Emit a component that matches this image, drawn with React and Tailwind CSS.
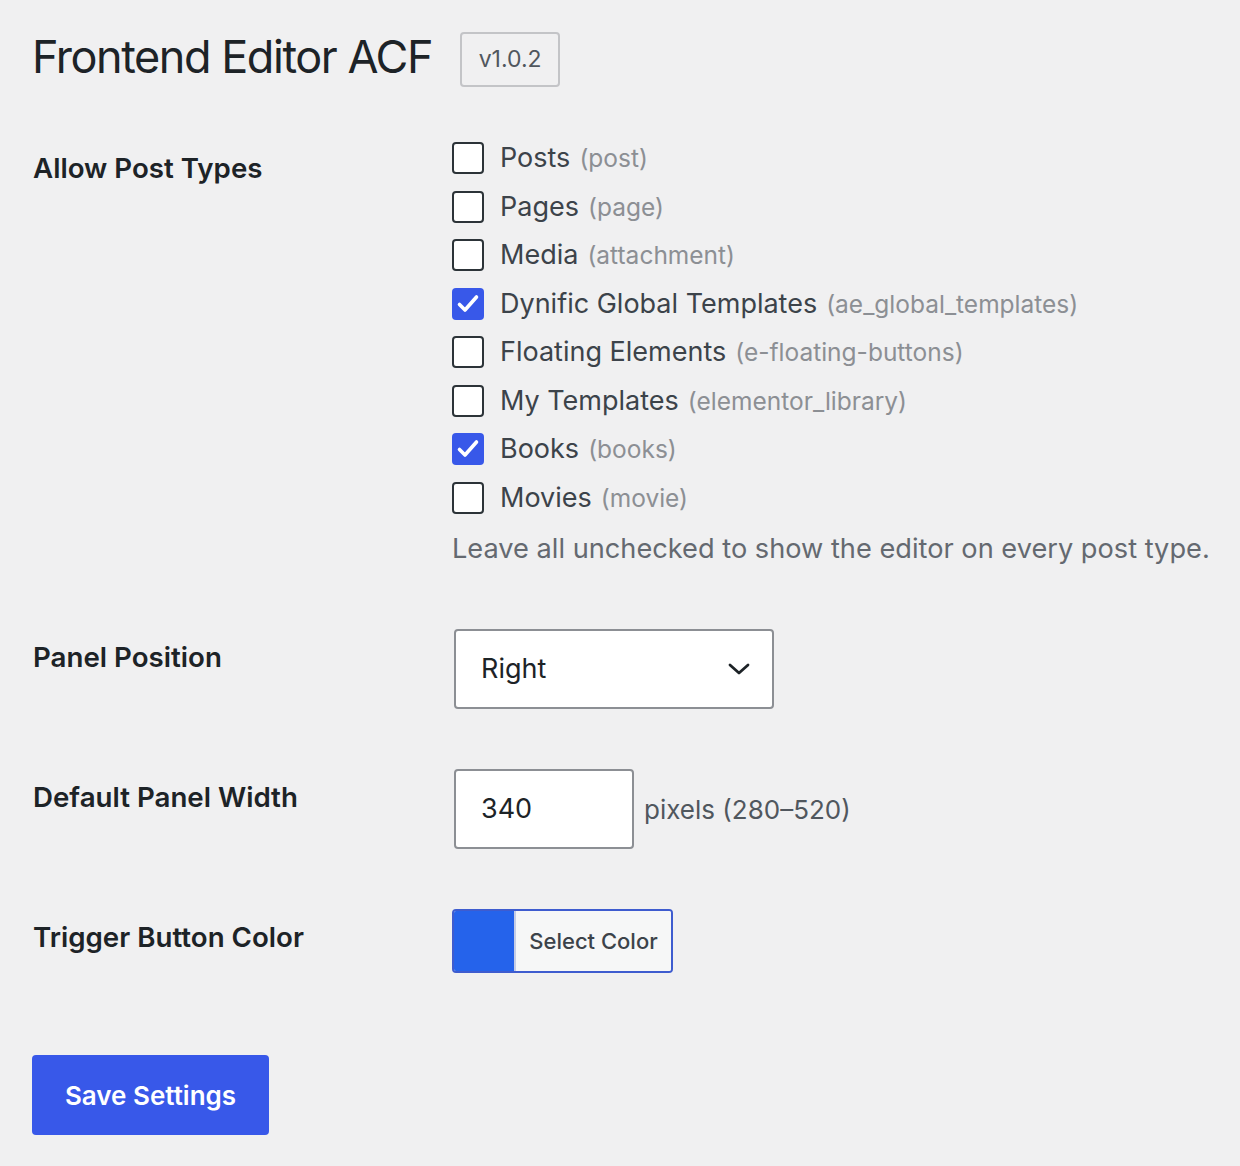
import React from "react";

const types = [
  ["Posts", "post", false],
  ["Pages", "page", false],
  ["Media", "attachment", false],
  ["Dynific Global Templates", "ae_global_templates", true],
  ["Floating Elements", "e-floating-buttons", false],
  ["My Templates", "elementor_library", false],
  ["Books", "books", true],
  ["Movies", "movie", false],
];

function Box({ checked }) {
  if (checked) {
    return (
      <span className="flex h-[32px] w-[32px] shrink-0 items-center justify-center rounded-[4px] bg-[#3858e9]">
        <svg width="32" height="32" viewBox="0 0 32 32" fill="none">
          <path d="M7.5 16.5 L13 22 L24.5 9" stroke="white" strokeWidth="3.6" strokeLinecap="round" strokeLinejoin="round" />
        </svg>
      </span>
    );
  }
  return <span className="block h-[32px] w-[32px] shrink-0 rounded-[4px] border-2 border-[#2c3338] bg-white" />;
}

export default function App() {
  return (
    <div className="min-h-[1166px] w-full bg-[#f0f0f1] pl-[32px] pt-[27px] text-[#1d2327]" style={{ fontFamily: "Inter, 'Noto Sans', sans-serif" }}>
      <div className="flex items-center">
        <h1 className="text-[45px] font-normal leading-[60px] tracking-[-1.45px] text-[#1d2327]">Frontend Editor ACF</h1>
        <span className="ml-[28px] mt-[4px] flex h-[55px] w-[100px] items-center justify-center rounded-[4px] border-2 border-[#c3c4c7] text-[23px] text-[#50575e]">v1.0.2</span>
      </div>

      {/* Allow post types */}
      <div className="mt-[47px] flex">
        <div className="w-[420px] shrink-0 pt-[16px] pl-[1px] text-[27.7px] font-semibold leading-[36px] text-[#1d2327]">Allow Post Types</div>
        <div className="flex flex-col">
          {types.map(([name, slug, checked]) => (
            <div key={slug} className="flex h-[48.5px] items-center">
              <Box checked={checked} />
              <span className="ml-[16px] text-[27px] leading-[36px] text-[#3c434a]">{name}</span>
              <span className="ml-[9px] text-[24.5px] leading-[36px] text-[#8c8f94]">({slug})</span>
            </div>
          ))}
          <p className="mt-[6px] text-[27.2px] leading-[42px] text-[#646970]">Leave all unchecked to show the editor on every post type.</p>
        </div>
      </div>

      {/* Panel position */}
      <div className="mt-[59px] flex">
        <div className="w-[422px] shrink-0 pt-[10px] pl-[1px] text-[27.7px] font-semibold leading-[36px] text-[#1d2327]">Panel Position</div>
        <div className="flex h-[80px] w-[320px] items-center justify-between rounded-[4px] border-2 border-[#8c8f94] bg-white pl-[25px] pr-[20px]">
          <span className="text-[27px] text-[#1d2327]">Right</span>
          <svg width="26" height="16" viewBox="0 0 26 16" fill="none">
            <path d="M4 4 L13 12 L22 4" stroke="#1d2327" strokeWidth="2.8" strokeLinecap="round" strokeLinejoin="round" />
          </svg>
        </div>
      </div>

      {/* Default panel width */}
      <div className="mt-[60px] flex">
        <div className="w-[422px] shrink-0 pt-[10px] pl-[1px] text-[27.7px] font-semibold leading-[36px] text-[#1d2327]">Default Panel Width</div>
        <div className="flex items-center">
          <div className="flex h-[80px] w-[180px] items-center rounded-[4px] border-2 border-[#8c8f94] bg-white pl-[25px]">
            <span className="text-[27px] text-[#1d2327]">340</span>
          </div>
          <span className="ml-[10px] text-[26px] text-[#50575e]">pixels (280–520)</span>
        </div>
      </div>

      {/* Trigger button color */}
      <div className="mt-[60px] flex">
        <div className="w-[420px] shrink-0 pt-[10px] pl-[1px] text-[27.7px] font-semibold leading-[36px] text-[#1d2327]">Trigger Button Color</div>
        <div className="flex h-[64px] w-[221px] overflow-hidden rounded-[4px] border-2 border-[#3e5ccf]">
          <span className="block h-full w-[60px] bg-[#2563eb]" />
          <span className="flex flex-1 items-center justify-center border-l-2 border-[#c5cde6] bg-[#f6f7f7] text-[22px] font-medium text-[#3c434a]">Select Color</span>
        </div>
      </div>

      <button className="mt-[82px] flex h-[80px] w-[237px] items-center justify-center rounded-[4px] bg-[#3858e9] text-[26px] font-semibold text-white">Save Settings</button>
    </div>
  );
}
